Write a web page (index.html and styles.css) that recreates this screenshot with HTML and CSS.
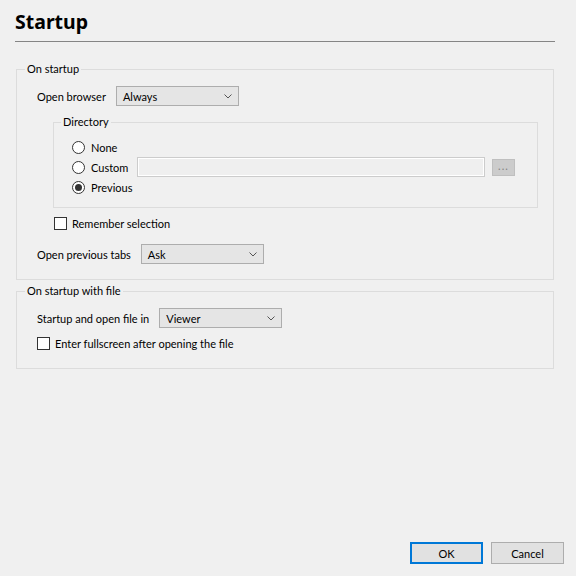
FILE: index.html
```html
<!DOCTYPE html>
<html lang="en">
<head>
<meta charset="utf-8">
<title>Startup</title>
<link rel="stylesheet" href="styles.css">
</head>
<body>
<div class="dialog">
  <header class="head">
    <h1 class="title">Startup</h1>
    <div class="rule"></div>
  </header>

  <main class="content">
    <fieldset class="group group-main">
      <legend class="legend">On startup</legend>
      <div class="group-body">
        <div class="row">
          <span class="label">Open browser</span>
          <div class="combo"><span class="combo-text">Always</span><svg class="chev" width="8" height="5" viewBox="0 0 8 5"><path d="M0.5 0.5 L4 4 L7.5 0.5" fill="none" stroke="#555" stroke-width="1"/></svg></div>
        </div>

        <fieldset class="group group-dir">
          <legend class="legend">Directory</legend>
          <div class="dir-body">
            <div class="opt"><span class="radio"></span><span class="opt-label">None</span></div>
            <div class="opt"><span class="radio"></span><span class="opt-label">Custom</span><div class="field"></div><span class="browse">...</span></div>
            <div class="opt"><span class="radio checked"></span><span class="opt-label">Previous</span></div>
          </div>
        </fieldset>

        <div class="check-row indent"><span class="check"></span><span>Remember selection</span></div>

        <div class="row row-tabs">
          <span class="label">Open previous tabs</span>
          <div class="combo"><span class="combo-text">Ask</span><svg class="chev" width="8" height="5" viewBox="0 0 8 5"><path d="M0.5 0.5 L4 4 L7.5 0.5" fill="none" stroke="#555" stroke-width="1"/></svg></div>
        </div>
      </div>
    </fieldset>

    <fieldset class="group group-file">
      <legend class="legend">On startup with file</legend>
      <div class="group-body">
        <div class="row">
          <span class="label">Startup and open file in</span>
          <div class="combo"><span class="combo-text">Viewer</span><svg class="chev" width="8" height="5" viewBox="0 0 8 5"><path d="M0.5 0.5 L4 4 L7.5 0.5" fill="none" stroke="#555" stroke-width="1"/></svg></div>
        </div>
        <div class="check-row"><span class="check"></span><span>Enter fullscreen after opening the file</span></div>
      </div>
    </fieldset>
  </main>

  <footer class="buttons">
    <span class="btn btn-default">OK</span>
    <span class="btn">Cancel</span>
  </footer>
</div>
</body>
</html>
```

FILE: styles.css
```css
* { box-sizing: border-box; }

html, body {
  margin: 0;
  padding: 0;
  background: #f0f0f0;
}

body {
  font-family: "Segoe UI", Lato, "Noto Sans", sans-serif;
  font-size: 11px;
  color: #000;
}

.dialog {
  width: 576px;
  height: 576px;
  display: flex;
  flex-direction: column;
}

/* page heading with its underline */
.head {
  padding: 8px 21px 0 15px;
}

.title {
  margin: 0;
  font-family: "Segoe UI", "Noto Sans", sans-serif;
  font-size: 19.5px;
  line-height: 27px;
  font-weight: 700;
}

.rule {
  margin-top: 6px;
  height: 1px;
  background: #858585;
}

/* group boxes */
.group {
  margin: 0;
  padding: 0 8px 15px;
  border: 1px solid #dcdcdc;
  min-width: 0;
}

.legend {
  padding: 0 2px;
  line-height: 16px;
}

.group-main {
  margin: 19px 22px 0 16px;
}

.group-file {
  margin: 3px 22px 0 16px;
}

.group-body {
  padding: 9px 0 0 12px;
}

.row {
  display: flex;
  align-items: center;
  gap: 10px;
  height: 20px;
}

.row-tabs {
  margin-top: 11px;
}

.label {
  white-space: nowrap;
}

/* drop-down boxes */
.combo {
  position: relative;
  width: 123px;
  height: 20px;
  background: #e5e5e5;
  border: 1px solid #adadad;
  display: flex;
  align-items: center;
  padding-left: 6px;
}

.combo-text {
  flex: 1;
}

.chev {
  margin-right: 6px;
}

/* directory sub-group */
.group-dir {
  margin: 8px 7px 0 16px;
  padding: 0 7px 10px;
}

.dir-body {
  padding: 7px 15px 0 11px;
}

.opt {
  display: flex;
  align-items: center;
  height: 20px;
}

.radio {
  width: 13px;
  height: 13px;
  border: 1px solid #333;
  border-radius: 50%;
  background: #fff;
  margin-right: 6px;
  flex: none;
  display: flex;
  align-items: center;
  justify-content: center;
}

.radio.checked::after {
  content: "";
  width: 7px;
  height: 7px;
  border-radius: 50%;
  background: #333;
}

.opt-label {
  min-width: 46px;
}

.field {
  flex: 1;
  height: 20px;
  background: #efefef;
  border: 1px solid #cccccc;
  box-shadow: inset 0 0 0 1px #fff;
}

.browse {
  flex: none;
  width: 23px;
  height: 17px;
  margin-left: 7px;
  background: #cccccc;
  border: 1px solid #bfbfbf;
  color: #838383;
  font-size: 11px;
  line-height: 12px;
  text-align: center;
  letter-spacing: 1px;
}

/* check boxes */
.check-row {
  display: flex;
  align-items: center;
  height: 20px;
  margin-top: 5px;
}

.check-row.indent {
  padding-left: 17px;
}

.check {
  width: 13px;
  height: 13px;
  border: 1px solid #333;
  background: #fff;
  margin-right: 5px;
  flex: none;
}

/* dialog buttons */
.buttons {
  margin-top: auto;
  display: flex;
  justify-content: flex-end;
  gap: 8px;
  padding: 0 12px 12px 0;
}

.btn {
  width: 73px;
  height: 22px;
  background: #e1e1e1;
  border: 1px solid #adadad;
  display: flex;
  align-items: center;
  justify-content: center;
}

.btn-default {
  border: 2px solid #0078d7;
}
```
